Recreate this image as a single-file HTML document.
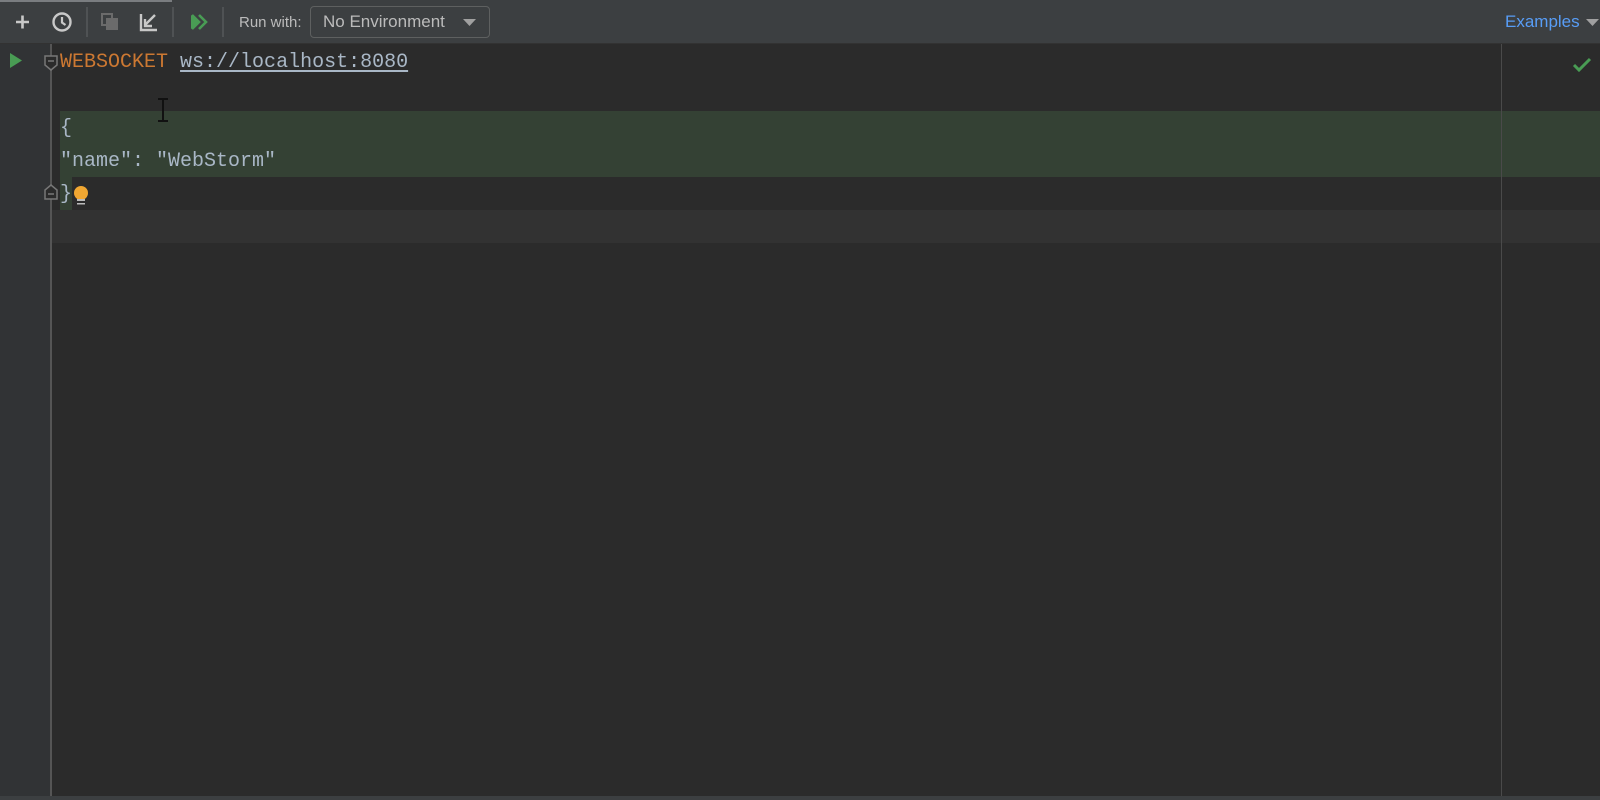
<!DOCTYPE html>
<html><head><style>
body{margin:0;width:1600px;height:800px;overflow:hidden;background:#2b2b2b;font-family:"Liberation Sans",sans-serif;position:relative}
.a{position:absolute}
.mono{font-family:"Liberation Mono",monospace;font-size:20px;white-space:pre;line-height:33px}
</style></head><body>
<div class="a" style="left:0;top:0;width:1600px;height:44px;background:#3c3f41"></div>
<div class="a" style="left:0;top:0;width:172px;height:2px;background:#7a7d80"></div>
<div class="a" style="left:0;top:43px;width:1600px;height:1px;background:#323232"></div>
<svg class="a" style="left:0;top:0" width="240" height="44">
<path d="M16 22h13M22.5 15.5v13" stroke="#c8c8c8" stroke-width="2.6"/>
<circle cx="62" cy="22" r="8.5" fill="none" stroke="#c8c8c8" stroke-width="2.4"/>
<path d="M62 17v5.5l3.5 2.5" stroke="#c8c8c8" stroke-width="2.2" fill="none"/>
<rect x="86" y="7" width="2" height="30" fill="#4f5254"/>
<rect x="102" y="14" width="10" height="11" fill="none" stroke="#6b6b6b" stroke-width="2"/>
<rect x="106" y="18" width="12" height="12" fill="#6b6b6b"/>
<path d="M141 14v16h16" stroke="#c8c8c8" stroke-width="2.4" fill="none"/>
<path d="M155 15l-10 10M145 19v7h7" stroke="#c8c8c8" stroke-width="2.4" fill="none"/>
<rect x="172" y="7" width="2" height="30" fill="#4f5254"/>
<path d="M192 15l7 7-7 7M199 15l7 7-7 7" fill="none" stroke="#499c54" stroke-width="2.6"/>
<path d="M191 15l7 7-7 7z" fill="#499c54"/>
<rect x="222" y="7" width="2" height="30" fill="#4f5254"/>
</svg>
<div class="a" style="left:239px;top:14px;font-size:15px;color:#bbbbbb">Run with:</div>
<div class="a" style="left:310px;top:6px;width:180px;height:32px;border:1px solid #5e6060;border-radius:4px;box-sizing:border-box;background:#3c3f41"></div>
<div class="a" style="left:323px;top:12px;font-size:17px;color:#bbbbbb">No Environment</div>
<svg class="a" style="left:463px;top:19px" width="14" height="8"><path d="M0 0h13l-6.5 7z" fill="#a0a0a0"/></svg>
<div class="a" style="left:1505px;top:12px;font-size:17px;color:#589df6">Examples</div>
<svg class="a" style="left:1586px;top:19px" width="14" height="8"><path d="M0 0h13l-6.5 7z" fill="#a0a0a0"/></svg>
<div class="a" style="left:0;top:44px;width:50px;height:752px;background:#313335"></div>
<div class="a" style="left:50px;top:44px;width:2px;height:752px;background:#555"></div>
<div class="a" style="left:0;top:796px;width:1600px;height:4px;background:#3c3f41"></div>
<div class="a" style="left:52px;top:210px;width:1548px;height:33px;background:#323232"></div>
<div class="a" style="left:60px;top:111px;width:1540px;height:66px;background:#344134"></div>
<div class="a" style="left:60px;top:177px;width:12px;height:33px;background:#344134"></div>
<div class="a" style="left:1501px;top:44px;width:1px;height:752px;background:#4a4a4a"></div>
<svg class="a" style="left:0;top:44px" width="100" height="170">
<path d="M10 9l12 7.5-12 7.5z" fill="#499c54"/>
<path d="M45 12h12v9l-6 5-6-5z" fill="#2b2b2b" stroke="#777" stroke-width="1.5"/>
<path d="M48 17h6" stroke="#777" stroke-width="1.5"/>
<path d="M45 155h12v-9l-6-5-6 5z" fill="#2b2b2b" stroke="#777" stroke-width="1.5"/>
<path d="M48 150h6" stroke="#777" stroke-width="1.5"/>
<circle cx="81" cy="149" r="7" fill="#f0a732"/>
<path d="M77 155h8v2h-8zM77 159h8v1.5h-8z" fill="#bbb"/>
</svg>
<svg class="a" style="left:153px;top:98px" width="20" height="26"><path d="M5 1h10M10 1v22M5 23h10" stroke="#111" stroke-width="2"/></svg>
<svg class="a" style="left:1572px;top:56px" width="22" height="18"><path d="M2 9l5 5 11-11" stroke="#499c54" stroke-width="3" fill="none"/></svg>
<div class="a mono" style="left:60px;top:46px;color:#a9b7c6"><span style="color:#cc7832">WEBSOCKET</span> <span style="text-decoration:underline;text-underline-offset:3px">ws://localhost:8080</span>

{
"name": "WebStorm"
}</div>
</body></html>
